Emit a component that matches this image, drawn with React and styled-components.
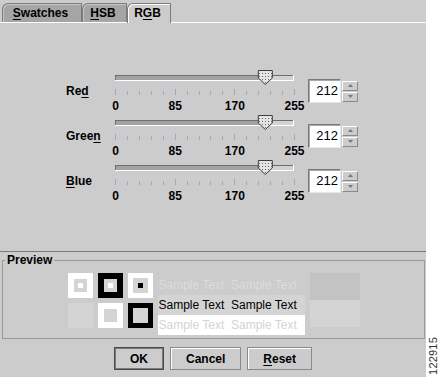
import React, { useId } from "react";
import styled, { createGlobalStyle } from "styled-components";

const GlobalStyle = createGlobalStyle`
  html, body { margin: 0; padding: 0; background: #fff; }
  body { font-family: "Liberation Sans", Arial, sans-serif; color: #000; }
`;

const Screen = styled.div`
  display: flex;
  width: 439px;
  height: 377px;
  overflow: hidden;
`;

const Dialog = styled.div`
  width: 426px;
  height: 377px;
  background: #cccccc;
  display: flex;
  flex-direction: column;
`;

const Margin = styled.div`
  flex: 1;
  display: flex;
  align-items: flex-end;
  justify-content: center;
  padding-bottom: 2px;
`;

const FigureId = styled.span`
  writing-mode: vertical-rl;
  transform: rotate(180deg);
  font-size: 11px;
  color: #333;
  letter-spacing: 0.2px;
`;

const TabBar = styled.div`
  height: 22px;
  display: flex;
  align-items: flex-end;
  padding-left: 2px;
`;

const Tab = styled.div`
  box-sizing: border-box;
  width: ${(p) => p.$w}px;
  height: ${(p) => (p.$active ? 20 : 19)}px;
  margin-bottom: ${(p) => (p.$active ? -1 : 0)}px;
  position: relative;
  z-index: ${(p) => (p.$active ? 1 : 0)};
  background: ${(p) => (p.$active ? "#cccccc" : "#a5a5a5")};
  border: 1px solid #7c7c7c;
  border-bottom: none;
  border-top-left-radius: 6px;
  box-shadow: inset 1px 1px 0 ${(p) => (p.$active ? "#ffffff" : "#c4c4c4")};
  display: flex;
  align-items: center;
  justify-content: center;
  padding: 0 3px 1px 0;
  font-size: 12px;
  font-weight: bold;
`;

const U = styled.span`
  text-decoration: underline;
  text-underline-offset: 2px;
`;

const TabPanel = styled.div`
  box-sizing: border-box;
  height: 230px;
  border-top: 1px solid #ffffff;
  border-bottom: 1px solid #7a7a7a;
  padding: 47px 0 0 66px;
`;

const SliderRow = styled.div`
  display: grid;
  grid-template-columns: 40px 200px auto;
  align-items: center;
  height: 45px;
`;

const ChannelLabel = styled.div`
  font-size: 12px;
  font-weight: bold;
  margin-bottom: 3px;
`;

const Spinner = styled.div`
  display: flex;
  height: 24px;
  margin: 0 0 3px 2px;
`;

const Field = styled.div`
  box-sizing: border-box;
  width: 33px;
  background: #ffffff;
  border: 1px solid;
  border-color: #7a7a7a #e8e8e8 #e8e8e8 #7a7a7a;
  box-shadow: inset 1px 1px 0 #a8a8a8;
  font-size: 13px;
  line-height: 22px;
  text-align: right;
  padding-right: 2px;
`;

const Arrows = styled.div`
  display: flex;
  flex-direction: column;
  justify-content: center;
  gap: 1px;
  margin-left: 1px;
`;

const ArrowBtn = styled.div`
  box-sizing: border-box;
  width: 16px;
  height: 10px;
  background: #cccccc;
  border: 1px solid;
  border-color: #ffffff #8a8a8a #8a8a8a #ffffff;
  display: flex;
  align-items: center;
  justify-content: center;
`;

const Fieldset = styled.fieldset`
  box-sizing: border-box;
  height: 86px;
  margin: 1px 1px 0 2px;
  padding: 0;
  border: 1px solid #9a9a9a;
  min-width: 0;
`;

const Legend = styled.legend`
  font-size: 12px;
  font-weight: bold;
  line-height: 14px;
  padding: 0 2px;
  margin-left: 2px;
`;

const PreviewBody = styled.div`
  display: flex;
  justify-content: center;
  align-items: flex-start;
  gap: 5px;
  padding-top: 6px;
`;

const SwatchGrid = styled.div`
  display: grid;
  grid-template-columns: repeat(3, 25px);
  grid-auto-rows: 25px;
  gap: 5px;
`;

const Swatch = styled.div`
  box-sizing: border-box;
  background: ${(p) => p.$fill};
  border: ${(p) => (p.$edge ? `${p.$bw}px solid ${p.$edge}` : "none")};
  display: flex;
  align-items: center;
  justify-content: center;
`;

const Dot = styled.div`
  width: 5px;
  height: 5px;
  background: ${(p) => p.$c};
`;

const TextBlock = styled.div`
  width: 147px;
  margin-top: 2px;
  display: flex;
  flex-direction: column;
`;

const SampleLine = styled.div`
  height: 20px;
  line-height: 20px;
  font-size: 12px;
  padding-left: 1px;
  white-space: pre;
  color: ${(p) => p.$fg};
  background: ${(p) => p.$bg};
`;

const ColorRects = styled.div`
  display: flex;
  flex-direction: column;
  width: 50px;
`;

const ColorRect = styled.div`
  height: 27px;
  background: ${(p) => p.$c};
`;

const ButtonBar = styled.div`
  display: flex;
  justify-content: center;
  gap: 6px;
  padding-top: 8px;
`;

const Button = styled.button`
  box-sizing: border-box;
  height: 23px;
  padding: 0 15px;
  margin: 0;
  background: #cccccc;
  font-family: "Liberation Sans", Arial, sans-serif;
  font-size: 12px;
  font-weight: bold;
  color: #000;
  border: 1px solid ${(p) => (p.$default ? "#4a4a4a" : "#8a8a8a")};
  box-shadow: ${(p) =>
    p.$default ? "inset 0 0 0 1px #7a7a7a" : "inset 1px 1px 0 #ffffff"};
  cursor: pointer;
`;

const Triangle = ({ up }) => (
  <svg width="5" height="3" viewBox="0 0 5 3">
    <polygon points={up ? "2.5,0 5,3 0,3" : "0,0 5,0 2.5,3"} fill="#777" />
  </svg>
);

const TRACK_X = 9;
const TRACK_W = 179;

const Slider = ({ value }) => {
  const id = useId().replace(/:/g, "");
  const cx = TRACK_X + (value / 255) * TRACK_W + 1.5;
  const ticks = Array.from({ length: 16 }, (_, i) => TRACK_X + (i * 17 * TRACK_W) / 255);
  return (
    <svg width="200" height="45" viewBox="0 0 200 45">
      <defs>
        <pattern id={`bumps${id}`} width="3" height="3" patternUnits="userSpaceOnUse">
          <rect width="3" height="3" fill="#e4e4e4" />
          <rect x="0" y="0" width="1" height="1" fill="#6a6a6a" />
        </pattern>
      </defs>
      <rect x={TRACK_X} y="5" width={TRACK_W} height="6" fill="#d2d2d2" />
      <rect x={TRACK_X + 1} y="6" width={cx - TRACK_X - 1} height="4" fill="#a3a3a3" />
      <line x1={TRACK_X} y1="5.5" x2={TRACK_X + TRACK_W} y2="5.5" stroke="#6e6e6e" />
      <line x1={TRACK_X + 0.5} y1="5" x2={TRACK_X + 0.5} y2="11" stroke="#6e6e6e" />
      <line x1={TRACK_X} y1="10.5" x2={TRACK_X + TRACK_W} y2="10.5" stroke="#ffffff" />
      <line x1={TRACK_X + TRACK_W - 0.5} y1="5" x2={TRACK_X + TRACK_W - 0.5} y2="11" stroke="#ffffff" />
      <polygon
        points={`${cx - 7},0.5 ${cx + 7},0.5 ${cx + 7},8 ${cx},14.5 ${cx - 7},8`}
        fill={`url(#bumps${id})`}
        stroke="#3e3e3e"
        strokeWidth="1"
      />
      {ticks.map((x, i) => (
        <line
          key={i}
          x1={Math.round(x) + 0.5}
          x2={Math.round(x) + 0.5}
          y1={i % 5 === 0 ? 19 : 21}
          y2={25}
          stroke="#a4a4cc"
        />
      ))}
      {[0, 85, 170, 255].map((n, i) => (
        <text
          key={n}
          x={ticks[i * 5] + 0.5}
          y="40"
          textAnchor="middle"
          fontFamily="Liberation Sans, Arial, sans-serif"
          fontWeight="bold"
          fontSize="12"
          fill="#000"
        >
          {n}
        </text>
      ))}
    </svg>
  );
};

const channels = [
  { name: ["Re", <U key="u">d</U>], value: 212 },
  { name: ["Gree", <U key="u">n</U>], value: 212 },
  { name: [<U key="u">B</U>, "lue"], value: 212 },
];

const App = () => {
  const c = "#d4d4d4";
  return (
    <>
      <GlobalStyle />
      <Screen>
        <Dialog>
          <TabBar>
            <Tab $w={80}>
              <span>
                <U>S</U>watches
              </span>
            </Tab>
            <Tab $w={45}>
              <span>
                <U>H</U>SB
              </span>
            </Tab>
            <Tab $w={44} $active>
              <span>
                R<U>G</U>B
              </span>
            </Tab>
          </TabBar>
          <TabPanel>
            {channels.map((ch, i) => (
              <SliderRow key={i}>
                <ChannelLabel>{ch.name}</ChannelLabel>
                <Slider value={ch.value} />
                <Spinner>
                  <Field>{ch.value}</Field>
                  <Arrows>
                    <ArrowBtn>
                      <Triangle up />
                    </ArrowBtn>
                    <ArrowBtn>
                      <Triangle />
                    </ArrowBtn>
                  </Arrows>
                </Spinner>
              </SliderRow>
            ))}
          </TabPanel>
          <Fieldset>
            <Legend>Preview</Legend>
            <PreviewBody>
              <SwatchGrid>
                <Swatch $fill={c} $edge="#fff" $bw={6}>
                  <Dot $c="#fff" />
                </Swatch>
                <Swatch $fill={c} $edge="#000" $bw={6}>
                  <Dot $c="#fff" />
                </Swatch>
                <Swatch $fill={c} $edge="#fff" $bw={5}>
                  <Dot $c="#000" />
                </Swatch>
                <Swatch $fill={c} />
                <Swatch $fill={c} $edge="#fff" $bw={6} />
                <Swatch $fill={c} $edge="#000" $bw={5} />
              </SwatchGrid>
              <TextBlock>
                <SampleLine $fg="#dcdcdc" $bg="transparent">
                  Sample Text  Sample Text
                </SampleLine>
                <SampleLine $fg="#000" $bg={c}>
                  Sample Text  Sample Text
                </SampleLine>
                <SampleLine $fg={c} $bg="#fff">
                  Sample Text  Sample Text
                </SampleLine>
              </TextBlock>
              <ColorRects>
                <ColorRect $c="#c3c3c3" />
                <ColorRect $c={c} />
              </ColorRects>
            </PreviewBody>
          </Fieldset>
          <ButtonBar>
            <Button $default>OK</Button>
            <Button>Cancel</Button>
            <Button>
              <U>R</U>eset
            </Button>
          </ButtonBar>
        </Dialog>
        <Margin>
          <FigureId>122915</FigureId>
        </Margin>
      </Screen>
    </>
  );
};

export default App;
